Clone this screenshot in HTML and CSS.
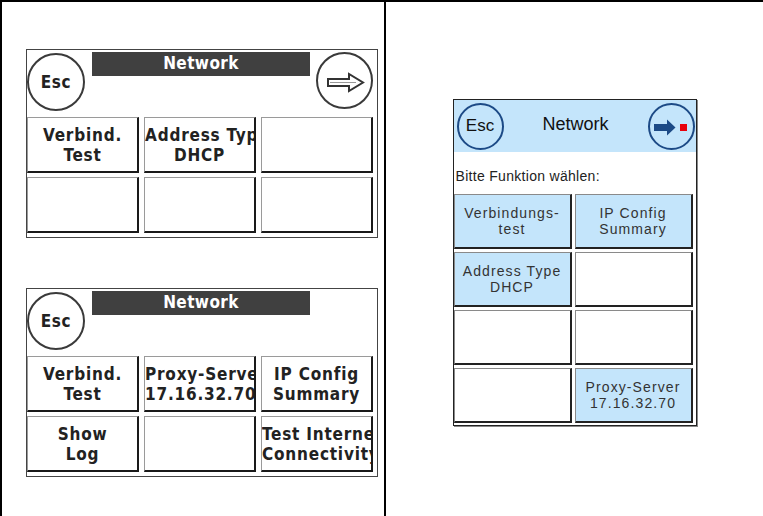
FILE: index.html
```html
<!DOCTYPE html>
<html lang="de">
<head>
    <meta charset="UTF-8">
    <meta name="viewport" content="width=device-width, initial-scale=1.0">
    <link rel="stylesheet" href="styles.css">
    <title>Network</title>
</head>
<body>

<div class="sheet">
    <!-- old monochrome display, two screens -->
    <div class="cell cell-left">
        <div class="lcd">
            <div class="lcd-head">
                <div class="lcd-circle">Esc</div>
                <div class="lcd-title">Network</div>
                <div class="lcd-circle lcd-next">
                    <svg width="53" height="53" viewBox="0 0 53 53">
                        <path d="M10 25 H31 V20 L45 28.5 L31 37 V32 H10 Z" fill="#fff" stroke="#333" stroke-width="2" stroke-linejoin="miter"/>
                        <path d="M12 28.5 H38" stroke="#999" stroke-width="1"/>
                    </svg>
                </div>
            </div>
            <div class="lcd-keys">
                <div class="lcd-key"><span>Verbind.</span><span>Test</span></div>
                <div class="lcd-key"><span>Address Type</span><span>DHCP</span></div>
                <div class="lcd-key"></div>
                <div class="lcd-key"></div>
                <div class="lcd-key"></div>
                <div class="lcd-key"></div>
            </div>
        </div>

        <div class="lcd">
            <div class="lcd-head">
                <div class="lcd-circle">Esc</div>
                <div class="lcd-title">Network</div>
            </div>
            <div class="lcd-keys">
                <div class="lcd-key"><span>Verbind.</span><span>Test</span></div>
                <div class="lcd-key"><span>Proxy-Server</span><span>17.16.32.70</span></div>
                <div class="lcd-key"><span>IP Config</span><span>Summary</span></div>
                <div class="lcd-key"><span>Show</span><span>Log</span></div>
                <div class="lcd-key"></div>
                <div class="lcd-key"><span>Test Internet</span><span>Connectivity</span></div>
            </div>
        </div>
    </div>

    <!-- new colour display -->
    <div class="cell cell-right">
        <div class="panel">
            <div class="panel-head">
                <div class="panel-circle">Esc</div>
                <div class="panel-title">Network</div>
                <div class="panel-circle">
                    <svg width="42" height="42" viewBox="0 0 42 42">
                        <path d="M4 19 H17 V14.5 L25.5 22.5 L17 30.5 V26 H4 Z" fill="#1c4a86"/>
                        <rect x="30" y="19" width="7" height="7" fill="#e8000b"/>
                    </svg>
                </div>
            </div>
            <div class="panel-label">Bitte Funktion wählen:</div>
            <div class="panel-keys">
                <div class="panel-key on"><span>Verbindungs-</span><span>test</span></div>
                <div class="panel-key on"><span>IP Config</span><span>Summary</span></div>
                <div class="panel-key on"><span>Address Type</span><span>DHCP</span></div>
                <div class="panel-key"></div>
                <div class="panel-key"></div>
                <div class="panel-key"></div>
                <div class="panel-key"></div>
                <div class="panel-key on"><span>Proxy-Server</span><span>17.16.32.70</span></div>
            </div>
        </div>
    </div>
</div>

</body>
</html>
```

FILE: styles.css
```css
body {
    margin: 0;
    overflow: hidden;
    background: #fff;
    font-family: "Liberation Sans", Arial, sans-serif;
}

.sheet {
    display: grid;
    grid-template-columns: 384px 377px;
    width: max-content;
    border: 2px solid #000;
}

.cell-left {
    display: flex;
    flex-direction: column;
    gap: 50px;
    padding: 47px 0 46px 24px;
    border-right: 2px solid #000;
}

.cell-right {
    display: flex;
    align-items: center;
    justify-content: center;
}

/* monochrome lcd */
.lcd {
    box-sizing: border-box;
    width: 352px;
    height: 189px;
    padding-right: 3px;
    border: 1px solid #444;
    background: #fff;
    font-family: "DejaVu Sans Condensed", "DejaVu Sans", sans-serif;
    font-stretch: condensed;
    font-weight: bold;
    color: #222;
}

.lcd-head {
    display: flex;
    align-items: flex-start;
    height: 67px;
}

.lcd-circle {
    box-sizing: border-box;
    width: 58px;
    height: 58px;
    margin-top: 3px;
    border: 2px solid #3a3a3a;
    border-radius: 50%;
    display: flex;
    align-items: center;
    justify-content: center;
    font-size: 17px;
    letter-spacing: 0.6px;
}

.lcd-next {
    width: 57px;
    height: 57px;
    margin-top: 2px;
}

.lcd-title {
    width: 218px;
    height: 24px;
    margin: 2px 6px 0 7px;
    background: #404040;
    color: #fff;
    text-align: center;
    line-height: 23px;
    font-size: 17px;
    letter-spacing: 0.4px;
}

.lcd-keys {
    display: grid;
    grid-template-columns: repeat(3, 112px);
    grid-template-rows: 56px 56px;
    column-gap: 5px;
    row-gap: 4px;
}

.lcd-key {
    box-sizing: border-box;
    display: flex;
    flex-direction: column;
    justify-content: center;
    overflow: hidden;
    white-space: nowrap;
    text-align: center;
    border-top: 1px solid #9a9a9a;
    border-left: 1px solid #9a9a9a;
    border-right: 2px solid #1a1a1a;
    border-bottom: 2px solid #1a1a1a;
    font-size: 17px;
    line-height: 20px;
    letter-spacing: 0.8px;
}

/* colour panel */
.panel {
    box-sizing: border-box;
    width: 244px;
    height: 327px;
    border: 1px solid #222;
    box-shadow: 1px 1px 0 #888;
    background: #fff;
    display: flex;
    flex-direction: column;
}

.panel-head {
    display: flex;
    align-items: center;
    height: 52px;
    padding: 0 1px 0 3px;
    background: #c4e5fb;
}

.panel-circle {
    box-sizing: border-box;
    width: 47px;
    height: 47px;
    border: 2px solid #1c4a86;
    border-radius: 50%;
    display: flex;
    align-items: center;
    justify-content: center;
    font-size: 17px;
    color: #111;
}

.panel-title {
    flex: 1;
    text-align: center;
    font-size: 18px;
    color: #111;
    padding-bottom: 4px;
}

.panel-label {
    box-sizing: border-box;
    height: 42px;
    padding: 16px 0 0 2px;
    font-size: 14px;
    line-height: 16px;
    letter-spacing: 0.3px;
    color: #222;
}

.panel-keys {
    display: grid;
    grid-template-columns: 118px 118px;
    grid-auto-rows: 55px;
    gap: 3px;
}

.panel-key {
    box-sizing: border-box;
    display: flex;
    flex-direction: column;
    justify-content: center;
    overflow: hidden;
    white-space: nowrap;
    text-align: center;
    border-top: 1px solid #8a8a8a;
    border-left: 1px solid #8a8a8a;
    border-right: 2px solid #222;
    border-bottom: 2px solid #222;
    font-size: 14px;
    line-height: 16px;
    letter-spacing: 1.1px;
    color: #333;
}

.panel-key.on {
    background: #c4e5fb;
}
```
